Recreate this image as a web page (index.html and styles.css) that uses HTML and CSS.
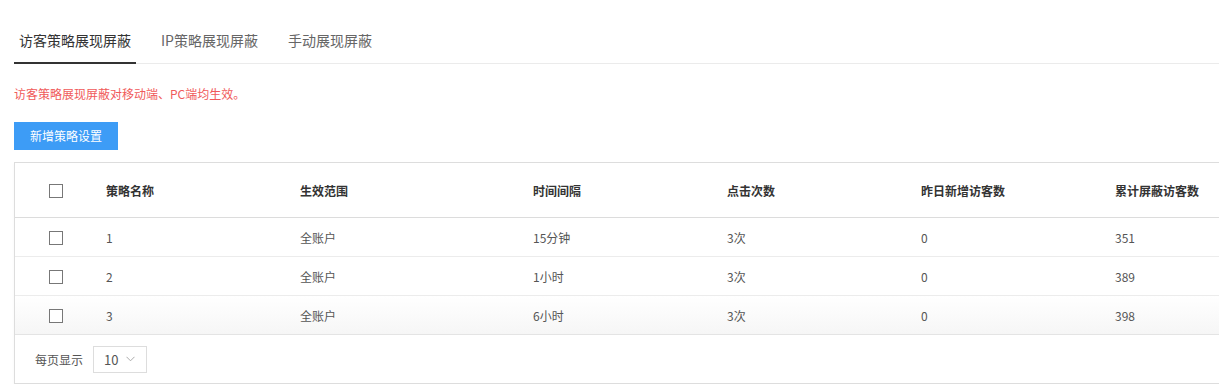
FILE: index.html
```html
<!DOCTYPE html>
<html lang="zh-CN">
<head>
<meta charset="utf-8">
<title>访客策略展现屏蔽</title>
<link rel="stylesheet" href="styles.css">
</head>
<body>
<div class="page">
  <div class="tabs">
    <div class="tab active">访客策略展现屏蔽</div>
    <div class="tab">IP策略展现屏蔽</div>
    <div class="tab">手动展现屏蔽</div>
  </div>
  <p class="notice">访客策略展现屏蔽对移动端、PC端均生效。</p>
  <button class="btn-primary">新增策略设置</button>
  <div class="table">
    <div class="row head">
      <div class="cell check"><span class="checkbox"></span></div>
      <div class="cell">策略名称</div>
      <div class="cell">生效范围</div>
      <div class="cell">时间间隔</div>
      <div class="cell">点击次数</div>
      <div class="cell">昨日新增访客数</div>
      <div class="cell">累计屏蔽访客数</div>
    </div>
    <div class="row">
      <div class="cell check"><span class="checkbox"></span></div>
      <div class="cell">1</div>
      <div class="cell">全账户</div>
      <div class="cell">15分钟</div>
      <div class="cell">3次</div>
      <div class="cell">0</div>
      <div class="cell">351</div>
    </div>
    <div class="row">
      <div class="cell check"><span class="checkbox"></span></div>
      <div class="cell">2</div>
      <div class="cell">全账户</div>
      <div class="cell">1小时</div>
      <div class="cell">3次</div>
      <div class="cell">0</div>
      <div class="cell">389</div>
    </div>
    <div class="row last">
      <div class="cell check"><span class="checkbox"></span></div>
      <div class="cell">3</div>
      <div class="cell">全账户</div>
      <div class="cell">6小时</div>
      <div class="cell">3次</div>
      <div class="cell">0</div>
      <div class="cell">398</div>
    </div>
    <div class="footer">
      <span class="label">每页显示</span>
      <div class="select">
        <span>10</span>
        <svg class="chev" width="9" height="6" viewBox="0 0 9 6"><path d="M0.5 0.8 L4.5 4.8 L8.5 0.8" fill="none" stroke="#aaa" stroke-width="1"/></svg>
      </div>
    </div>
  </div>
</div>
</body>
</html>
```
FILE: styles.css
```css
html, body {
  margin: 0;
  padding: 0;
  background: #fff;
  overflow: hidden;
}
body {
  font-family: "Noto Sans CJK SC", "Noto Sans", sans-serif;
  color: #555;
}
.page {
  width: 1260px;
  padding-left: 14px;
}
.tabs {
  display: flex;
  gap: 20px;
  padding-top: 30px;
  border-bottom: 1px solid #ebebeb;
}
.tab {
  font-size: 14px;
  line-height: 20px;
  padding: 0 5px 12px;
  color: #666;
  border-bottom: 2px solid transparent;
  margin-bottom: -1px;
}
.tab.active {
  color: #333;
  border-bottom-color: #333;
}
.notice {
  margin: 21px 0 0;
  font-size: 12px;
  line-height: 18px;
  color: #f05a5a;
}
.btn-primary {
  display: block;
  margin-top: 19px;
  height: 28px;
  padding: 0 16px;
  border: 0;
  background: #3d9cf6;
  color: #fff;
  font-family: inherit;
  font-size: 12px;
  line-height: 28px;
}
.table {
  margin-top: 12px;
  border: 1px solid #ddd;
  border-right: 0;
  box-shadow: 0 2px 3px rgba(0,0,0,0.04);
}
.row {
  display: grid;
  grid-template-columns: 84px 194px 233px 194px 194px 194px 1fr;
  height: 38px;
  border-bottom: 1px solid #ececec;
  align-items: center;
  font-size: 12px;
  color: #555;
}
.row.head {
  height: 54px;
  border-bottom-color: #dcdcdc;
  color: #333;
  font-weight: bold;
}
.row.last {
  background: linear-gradient(#fff, #f6f6f6);
  border-bottom-color: #e4e4e4;
}
.cell {
  padding-left: 7px;
}
.cell.check {
  padding-left: 34px;
  display: flex;
}
.checkbox {
  width: 12px;
  height: 12px;
  border: 1px solid #777;
  background: #fff;
  display: block;
  margin-top: 2px;
}
.footer {
  height: 48px;
  display: flex;
  align-items: center;
  padding-left: 20px;
  gap: 10px;
  font-size: 12px;
  color: #555;
}
.select {
  border: 1px solid #ddd;
  display: flex;
  align-items: center;
  padding-left: 10px;
  box-sizing: border-box;
  width: 54px;
  height: 27px;
  gap: 8px;
  font-size: 13px;
}
.chev {
  display: block;
}
```
